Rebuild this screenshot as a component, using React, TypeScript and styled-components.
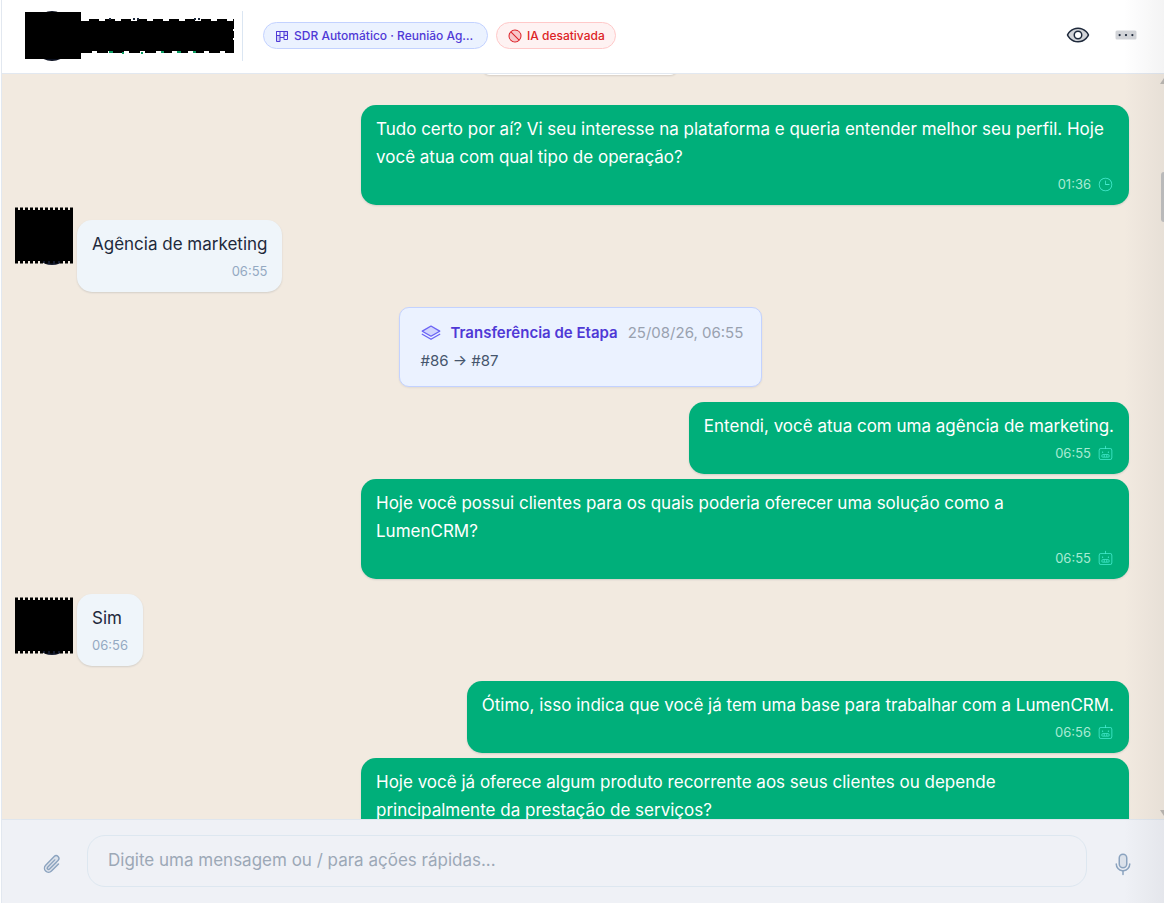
import React from 'react';
import styled, { createGlobalStyle, css } from 'styled-components';
import {
  PiClockLight,
  PiDotsThreeDuotone,
  PiEyeDuotone,
  PiKanbanDuotone,
  PiMicrophoneDuotone,
  PiPaperclipDuotone,
  PiProhibitDuotone,
  PiRobotLight,
  PiStackSimpleDuotone,
} from 'react-icons/pi';

const GlobalStyle = createGlobalStyle`
  *, *::before, *::after { box-sizing: border-box; }
  body {
    margin: 0;
    font-family: Inter, "Open Sans", sans-serif;
    background: #fff;
    color: #1e293b;
  }
  button { font: inherit; border: 0; padding: 0; background: none; cursor: pointer; }
  h2, p { margin: 0; }
`;

const Shell = styled.main`
  position: relative;
  display: flex;
  flex-direction: column;
  height: 100vh;
  margin-left: 1px;
  border-left: 1px solid #e2e8f0;
  overflow: hidden;
`;

const Header = styled.header`
  display: flex;
  align-items: center;
  flex: none;
  height: 74px;
  padding: 0 26px 2px 23px;
  border-bottom: 1px solid #e2e8f0;
  background: #fff;
`;

const Contact = styled.div`
  display: flex;
  padding-right: 7px;
  border-right: 1px solid #dbe6f2;
  margin-right: 20px;
`;

const Tags = styled.div`
  display: flex;
  gap: 8px;
  flex: 1;
  min-width: 0;
`;

const Tag = styled.button<{ $tone: 'indigo' | 'red' }>`
  display: flex;
  align-items: center;
  gap: 4px;
  height: 27px;
  padding: 0 10px;
  border: 1px solid;
  border-radius: 14px;
  font-size: 12px;
  font-weight: 500;
  white-space: nowrap;
  ${({ $tone }) =>
    $tone === 'indigo'
      ? css`
          width: 225px;
          color: #4f39d6;
          background: #ebf2ff;
          border-color: #c3d2ff;
        `
      : css`
          color: #dc1f26;
          background: #fef2f2;
          border-color: #ffc9c9;
        `}
  svg { flex: none; }
`;

const Actions = styled.div`
  display: flex;
  align-items: center;
  gap: 24px;
  padding-bottom: 2px;
`;

const IconButton = styled.button<{ $color: string }>`
  display: flex;
  align-items: center;
  color: ${({ $color }) => $color};
`;

const Chat = styled.section`
  position: relative;
  flex: 1;
  min-height: 0;
  overflow: hidden;
  background: #f2eae0;
`;

const Thread = styled.div`
  display: flex;
  flex-direction: column;
  gap: 15px;
  margin-top: -31px;
  padding: 0 35px 0 13px;
`;

const PastCard = styled.div`
  align-self: center;
  width: 196px;
  height: 32px;
  margin: 0 0 15px 16px;
  border-radius: 8px;
  background: #fff;
  box-shadow: 0 1px 2px rgba(0, 0, 0, 0.12);
`;

const Group = styled.div`
  display: flex;
  flex-direction: column;
  align-items: flex-end;
  gap: 5px;
`;

const Incoming = styled.div`
  display: flex;
  align-items: flex-start;
  gap: 4px;
`;

const Bubble = styled.article<{ $out?: boolean; $wide?: boolean }>`
  width: ${({ $wide }) => ($wide ? '100%' : 'auto')};
  max-width: 768px;
  padding: 10px 15px 12px;
  border-radius: 15px;
  font-size: 17px;
  line-height: 28px;
  white-space: pre-line;
  color: ${({ $out }) => ($out ? '#fff' : '#1e293b')};
  background: ${({ $out }) => ($out ? '#00af7a' : '#eff5fa')};
  box-shadow: 0 1px 2px rgba(30, 41, 59, 0.14);
`;

const Meta = styled.div<{ $out?: boolean }>`
  display: flex;
  justify-content: flex-end;
  align-items: center;
  gap: 6px;
  margin-top: 4px;
  font-size: 13px;
  line-height: 18px;
  color: ${({ $out }) => ($out ? '#a8ebd3' : '#94a9c2')};
  svg { color: #46ecd0; }
`;

const Stage = styled.article`
  align-self: center;
  width: 363px;
  height: 80px;
  margin-left: 16px;
  padding: 11px 16px 11px 21px;
  border: 1px solid #c3d2ff;
  border-radius: 10px;
  background: #ebf2ff;
  box-shadow: 0 1px 2px rgba(30, 41, 59, 0.08);
  font-size: 15px;
  line-height: 28px;
  color: #45556c;
`;

const StageHead = styled.div`
  display: flex;
  align-items: center;
  gap: 10px;
  white-space: nowrap;
  svg { color: #6a63f5; }
`;

const StageTitle = styled.h2`
  font-size: 15px;
  font-weight: 600;
  color: #4f39d6;
`;

const StageTime = styled.time`
  color: #99a1af;
`;

const Avatar = styled.svg<{ $shift: number }>`
  flex: none;
  margin-top: ${({ $shift }) => $shift}px;
`;

const Composer = styled.form`
  display: flex;
  align-items: flex-end;
  flex: none;
  gap: 24px;
  height: 84px;
  padding: 0 29px 16px 39px;
  border-top: 1px solid #dfe6ee;
  background: #eff1f6;
  ${IconButton} { height: 46px; }
`;

const MessageInput = styled.input`
  flex: 1;
  min-width: 0;
  height: 52px;
  padding: 0 20px 2px;
  border: 1px solid #dde7f0;
  border-radius: 18px;
  background: transparent;
  font: inherit;
  font-size: 17px;
  color: #1e293b;
  outline: none;
  &::placeholder { color: #9ca8b6; opacity: 1; }
`;

const EdgeShade = styled.div`
  position: absolute;
  inset: 0 0 0 auto;
  width: 40px;
  pointer-events: none;
  background: linear-gradient(to right, rgba(60, 60, 70, 0), rgba(60, 60, 70, 0.06));
`;

const ScrollMarks = styled.div`
  position: absolute;
  inset: 4px 0 3px auto;
  width: 4px;
  display: flex;
  flex-direction: column;
  justify-content: space-between;
`;

const Thumb = styled.div`
  position: absolute;
  top: 98px;
  right: 0;
  width: 3px;
  height: 50px;
  border-radius: 3px 0 0 3px;
  background: #c1c1c1;
`;

function HiddenContact() {
  return (
    <svg width="210" height="50" viewBox="0 0 210 50" role="img" aria-label="Contato">
      <ellipse cx="27" cy="25" rx="22" ry="25" fill="#0b1020" />
      <rect y="1" width="56" height="47" />
      <rect x="56" y="10" width="152" height="30" />
      <path d="M208 10V18M208 20V27M208 29V40" stroke="#000" strokeWidth="2" />
      <path d="M64 9H209" stroke="#000" strokeWidth="2" strokeDasharray="10 6" />
      <path d="M56 41H209" stroke="#000" strokeWidth="2" strokeDasharray="11 5" />
      <path d="M84 41H88M97 42H99M116 42H118M136 41H139M152 41H156M168 41H171" stroke="#0a9b62" strokeWidth="2" />
      <path d="M84 8H86M108 8H110M112 8H114M169 8H171M173 8H175" stroke="#1e293b" strokeWidth="2" />
    </svg>
  );
}

function HiddenAvatar({ shift }: { shift: number }) {
  return (
    <Avatar $shift={shift} width="58" height="58" viewBox="0 0 58 58" role="img" aria-label="Contato">
      <ellipse cx="37" cy="54" rx="10" ry="4" fill="#141a2e" />
      <rect y="3" width="58" height="51" />
      <path d="M0 2H58M0 55H58" stroke="#000" strokeWidth="3" strokeDasharray="3 2" />
    </Avatar>
  );
}

type MessageProps = { text: string; time: string; out?: boolean; wide?: boolean; icon?: React.ReactNode };

function Message({ text, time, out, wide, icon }: MessageProps) {
  return (
    <Bubble $out={out} $wide={wide}>
      <p>{text}</p>
      <Meta $out={out}>
        <time>{time}</time>
        {icon}
      </Meta>
    </Bubble>
  );
}

export default function App() {
  const robot = <PiRobotLight size={17} />;
  return (
    <>
      <GlobalStyle />
      <Shell>
        <Header>
          <Contact>
            <HiddenContact />
          </Contact>
          <Tags>
            <Tag $tone="indigo" type="button">
              <PiKanbanDuotone size={16} />
              SDR Automático · Reunião Ag…
            </Tag>
            <Tag $tone="red" type="button">
              <PiProhibitDuotone size={16} />
              IA desativada
            </Tag>
          </Tags>
          <Actions>
            <IconButton $color="#1e293b" type="button" aria-label="Visualizar">
              <PiEyeDuotone size={24} />
            </IconButton>
            <IconButton $color="#1e293b" type="button" aria-label="Mais opções">
              <PiDotsThreeDuotone size={24} />
            </IconButton>
          </Actions>
        </Header>

        <Chat>
          <Thread>
            <PastCard />
            <Group>
              <Message
                out
                wide
                text="Tudo certo por aí? Vi seu interesse na plataforma e queria entender melhor seu perfil. Hoje você atua com qual tipo de operação?"
                time="01:36"
                icon={<PiClockLight size={17} />}
              />
            </Group>
            <Incoming>
              <HiddenAvatar shift={-13} />
              <Message text="Agência de marketing" time="06:55" />
            </Incoming>
            <Stage>
              <StageHead>
                <PiStackSimpleDuotone size={20} />
                <StageTitle>Transferência de Etapa</StageTitle>
                <StageTime>25/08/26, 06:55</StageTime>
              </StageHead>
              <p>#86 → #87</p>
            </Stage>
            <Group>
              <Message out text="Entendi, você atua com uma agência de marketing." time="06:55" icon={robot} />
              <Message
                out
                wide
                text={'Hoje você possui clientes para os quais poderia oferecer uma solução como a\nLumenCRM?'}
                time="06:55"
                icon={robot}
              />
            </Group>
            <Incoming>
              <HiddenAvatar shift={3} />
              <Message text="Sim" time="06:56" />
            </Incoming>
            <Group>
              <Message
                out
                text="Ótimo, isso indica que você já tem uma base para trabalhar com a LumenCRM."
                time="06:56"
                icon={robot}
              />
              <Message
                out
                wide
                text="Hoje você já oferece algum produto recorrente aos seus clientes ou depende principalmente da prestação de serviços?"
                time="06:56"
                icon={robot}
              />
            </Group>
          </Thread>
          <ScrollMarks>
            <svg width="4" height="6" viewBox="0 0 4 6"><path d="M4 0L0 6H4Z" fill="#bcb8b3" /></svg>
            <svg width="4" height="6" viewBox="0 0 4 6"><path d="M0 0H4V6Z" fill="#bcb8b3" /></svg>
          </ScrollMarks>
          <Thumb />
        </Chat>

        <Composer>
          <IconButton $color="#8ba3bf" type="button" aria-label="Anexar arquivo">
            <PiPaperclipDuotone size={22} />
          </IconButton>
          <MessageInput aria-label="Mensagem" placeholder="Digite uma mensagem ou / para ações rápidas..." />
          <IconButton $color="#8ba3bf" type="button" aria-label="Gravar áudio">
            <PiMicrophoneDuotone size={24} />
          </IconButton>
        </Composer>
        <EdgeShade />
      </Shell>
    </>
  );
}
